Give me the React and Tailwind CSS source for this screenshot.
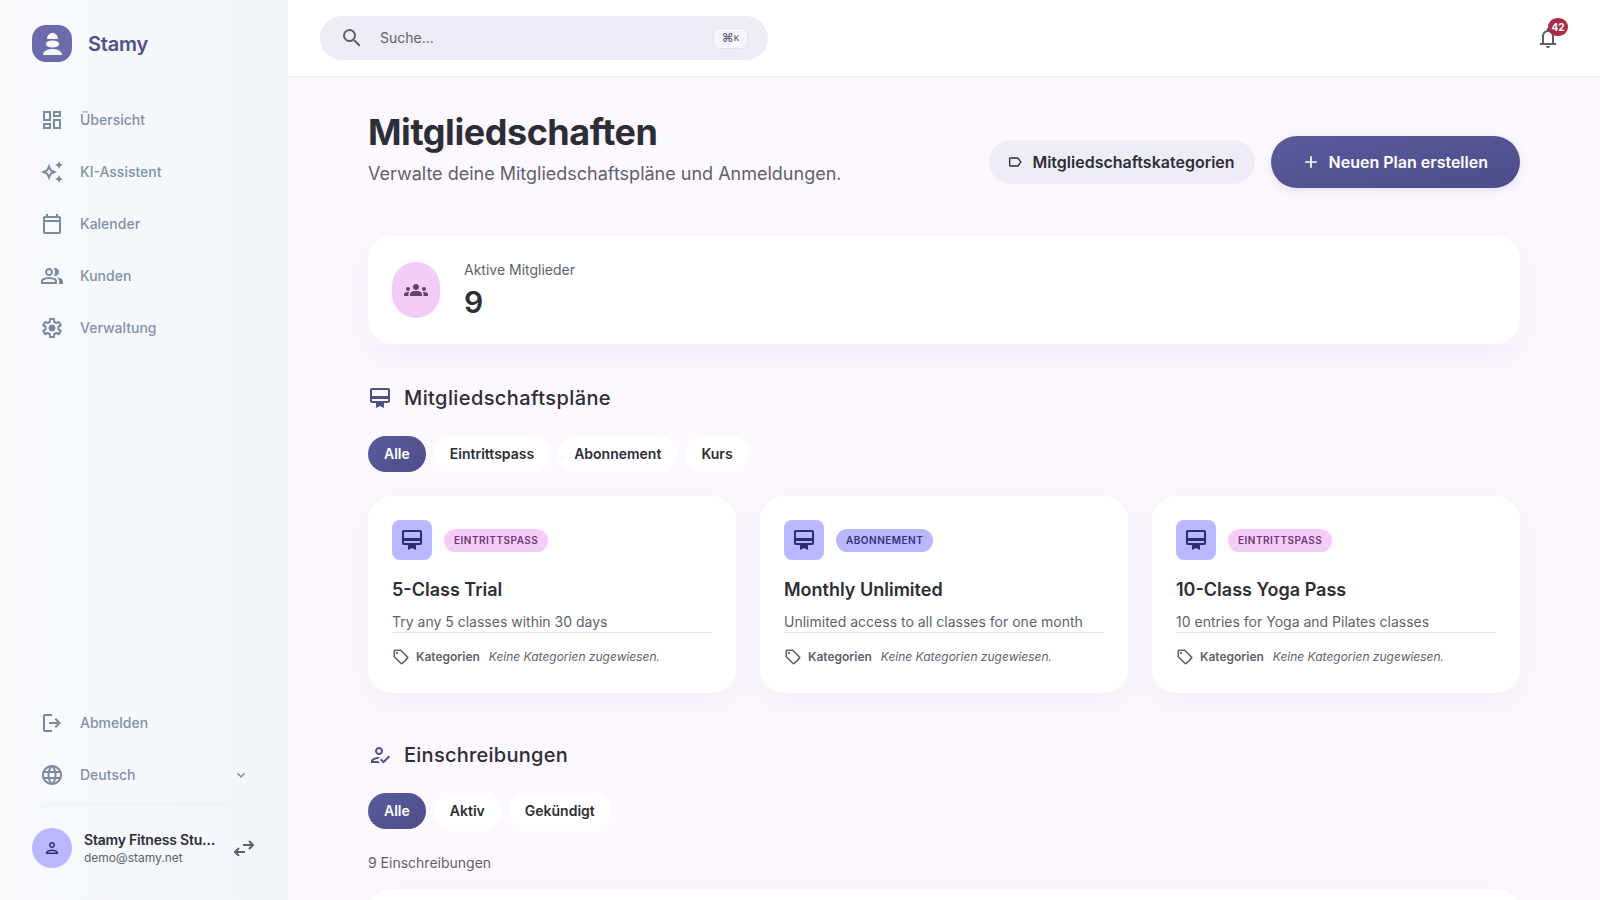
import React from 'react';
import {
  MdAdd,
  MdExpandMore,
  MdGroups,
  MdOutlineAutoAwesome,
  MdOutlineCardMembership,
  MdOutlineDashboard,
  MdOutlineHowToReg,
  MdOutlineLabel,
  MdOutlineLanguage,
  MdOutlinePerson,
  MdOutlineSearch,
  MdOutlineSell,
} from 'react-icons/md';

// Material Symbols paths, the classic set in react-icons draws these a bit differently
const Sym = ({ d, className }) => (
  <svg viewBox="0 -960 960 960" fill="currentColor" className={className}>
    <path d={d} />
  </svg>
);

const CalendarIcon = ({ className }) => (
  <Sym
    className={className}
    d="M200-80q-33 0-56.500-23.500T120-160v-560q0-33 23.500-56.500T200-800h40v-80h80v80h320v-80h80v80h40q33 0 56.500 23.500T840-720v560q0 33-23.500 56.500T760-80H200Zm0-80h560v-400H200v400Zm0-480h560v-80H200v80Zm0 0v-80 80Z"
  />
);

const GroupIcon = ({ className }) => (
  <Sym
    className={className}
    d="M40-160v-112q0-34 17.500-62.500T104-378q62-31 126-46.500T360-440q66 0 130 15.500T616-378q29 15 46.500 43.500T680-272v112H40Zm720 0v-120q0-44-24.500-84.500T666-434q51 6 96 20.500t84 35.500q36 20 55 44.500t19 53.500v120H760ZM360-480q-66 0-113-47t-47-113q0-66 47-113t113-47q66 0 113 47t47 113q0 66-47 113t-113 47Zm400-160q0 66-47 113t-113 47q-11 0-28-2.500t-28-5.500q27-32 41.500-71t14.500-81q0-42-14.500-81T544-792q14-5 28-6.500t28-1.500q66 0 113 47t47 113ZM120-240h480v-32q0-11-5.500-20T580-306q-54-27-109-40.500T360-360q-56 0-111 13.500T140-306q-9 5-14.500 14t-5.500 20v32Zm240-320q33 0 56.500-23.500T440-640q0-33-23.500-56.500T360-720q-33 0-56.500 23.500T280-640q0 33 23.500 56.500T360-560Zm0 320Zm0-400Z"
  />
);

const SettingsIcon = ({ className }) => (
  <Sym
    className={className}
    d="m370-80-16-128q-13-5-24.500-12T307-235l-119 50L78-375l103-78q-1-7-1-13.500v-27q0-6.500 1-13.500L78-585l110-190 119 50q11-8 23-15t24-12l16-128h220l16 128q13 5 24.500 12t22.500 15l119-50 110 190-103 78q1 7 1 13.500v27q0 6.500-2 13.500l103 78-110 190-118-50q-11 8-23 15t-24 12L590-80H370Zm70-80h79l14-106q31-8 57.500-23.500T639-327l99 41 39-68-86-65q5-14 7-29.500t2-31.500q0-16-2-31.500t-7-29.500l86-65-39-68-99 42q-22-23-48.500-38.500T533-694l-13-106h-79l-14 106q-31 8-57.500 23.500T321-633l-99-41-39 68 86 64q-5 15-7 30t-2 32q0 16 2 31t7 30l-86 65 39 68 99-42q22 23 48.500 38.500T427-266l13 106Zm42-180q58 0 99-41t41-99q0-58-41-99t-99-41q-59 0-99.500 41T342-480q0 58 40.500 99t99.500 41Zm-2-140Z"
  />
);

const LogoutIcon = ({ className }) => (
  <Sym
    className={className}
    d="M200-120q-33 0-56.500-23.500T120-200v-560q0-33 23.500-56.500T200-840h280v80H200v560h280v80H200Zm440-160-55-58 102-102H360v-80h327L585-622l55-58 200 200-200 200Z"
  />
);

const BellIcon = ({ className }) => (
  <Sym
    className={className}
    d="M160-200v-80h80v-280q0-83 50-147.500T420-792v-28q0-25 17.500-42.500T480-880q25 0 42.500 17.500T540-820v28q80 20 130 84.500T720-560v280h80v80H160Zm320-300Zm0 420q-33 0-56.500-23.500T400-160h160q0 33-23.500 56.500T480-80ZM320-280h320v-280q0-66-47-113t-113-47q-66 0-113 47t-47 113v280Z"
  />
);

const navItems = [
  { label: 'Übersicht', icon: MdOutlineDashboard },
  { label: 'KI-Assistent', icon: MdOutlineAutoAwesome },
  { label: 'Kalender', icon: CalendarIcon },
  { label: 'Kunden', icon: GroupIcon },
  { label: 'Verwaltung', icon: SettingsIcon },
];

const plans = [
  { title: '5-Class Trial', text: 'Try any 5 classes within 30 days', type: 'Eintrittspass' },
  { title: 'Monthly Unlimited', text: 'Unlimited access to all classes for one month', type: 'Abonnement' },
  { title: '10-Class Yoga Pass', text: '10 entries for Yoga and Pilates classes', type: 'Eintrittspass' },
];

const NavRow = ({ icon: Icon, label, children }) => (
  <div className="flex h-[52px] items-center gap-4 pl-10 pr-[39px] text-[14px] font-medium text-[#8490a6]">
    <Icon className="h-6 w-6 shrink-0 text-[#7c89a1]" />
    <span className="flex-1 pb-0.5">{label}</span>
    {children}
  </div>
);

const Chips = ({ items }) => (
  <div className="mt-6 flex gap-2">
    {items.map((item, i) => (
      <button
        key={item}
        className={`h-9 rounded-full px-4 pb-0.5 text-[14px] font-semibold ${
          i === 0
            ? 'bg-gradient-to-br from-[#5b5b9c] to-[#4c4c8a] text-white'
            : 'bg-white text-[#2d2d36]'
        }`}
      >
        {item}
      </button>
    ))}
  </div>
);

const PlanCard = ({ plan }) => {
  const isPass = plan.type === 'Eintrittspass';
  return (
    <div className="rounded-3xl bg-white p-6 pb-[27px] shadow-[0_8px_30px_rgba(90,80,160,0.06)]">
      <div className="flex items-center gap-3">
        <div className="flex h-10 w-10 items-center justify-center rounded-lg bg-[#b9b8ff]">
          <MdOutlineCardMembership className="h-6 w-6 text-[#2d2b75]" />
        </div>
        <span
          className={`flex h-[23px] items-center rounded-full px-2.5 text-[10px] font-semibold uppercase tracking-[0.5px] ${
            isPass ? 'bg-[#f4ccf8] text-[#6a3a72]' : 'bg-[#b9b8ff] text-[#33327c]'
          }`}
        >
          {plan.type}
        </span>
      </div>
      <h3 className="mt-4 text-[18px] leading-7 font-semibold text-[#2d2d36]">{plan.title}</h3>
      <p className="mt-2 border-b border-[#e3e1e9] text-[14px] leading-5 text-[#5f5f6e]">{plan.text}</p>
      <div className="mt-[15px] flex h-[18px] items-center text-[12px] text-[#5f5f6e]">
        <MdOutlineSell className="h-[18px] w-[18px]" />
        <span className="ml-1.5 font-semibold">Kategorien</span>
        <span className="ml-[9px] italic">Keine Kategorien zugewiesen.</span>
      </div>
    </div>
  );
};

const Logo = () => (
  <div className="flex h-[37px] w-10 items-center justify-center rounded-[14px] bg-[#6b6bab]">
    <svg viewBox="0 0 40 37" className="h-[37px] w-10 fill-[#f7f6ff]">
      <path d="M15 14c0-3.500 2.500-6 5.500-6s5.500 2.500 5.500 6z" />
      <ellipse cx="20.500" cy="19" rx="6.800" ry="3.600" />
      <path d="M11 30c0-3.500 4-6 9.500-6S30 26.500 30 30z" />
    </svg>
  </div>
);

const SwapIcon = () => (
  <svg viewBox="0 0 20 16" className="h-4 w-5 shrink-0 fill-none stroke-[#5f5f6e] stroke-2">
    <path d="M9 5h10M15 1l4 4-4 4" />
    <path d="M11 12H1M5 8l-4 4 4 4" />
  </svg>
);

const App = () => {
  return (
    <div className="flex h-screen overflow-hidden bg-[#fdf8ff] font-['Inter',sans-serif]">
      {/* Sidebar */}
      <aside className="flex w-72 shrink-0 flex-col bg-gradient-to-r from-[#f8fafc] to-[#f2f5fa]">
        <div className="flex items-center gap-4 pl-8 pt-[25px]">
          <Logo />
          <span className="text-[20px] font-semibold tracking-[-0.2px] text-[#4f4f8d]">Stamy</span>
        </div>
        <nav className="mt-[32px]">
          {navItems.map((item) => (
            <NavRow key={item.label} icon={item.icon} label={item.label} />
          ))}
        </nav>
        <div className="mt-auto">
          <NavRow icon={LogoutIcon} label="Abmelden" />
          <NavRow icon={MdOutlineLanguage} label="Deutsch">
            <MdExpandMore className="h-4 w-4 text-[#7c89a1]" />
          </NavRow>
          <div className="mx-6 mt-[2px] flex h-[97px] items-start rounded-t-[32px] border-t border-[#eef0f5] px-2 pt-6">
            <div className="flex h-10 w-10 shrink-0 items-center justify-center rounded-full bg-[#b9b8ff]">
              <MdOutlinePerson className="h-[18px] w-[18px] text-[#2d2b75]" />
            </div>
            <div className="ml-3 mt-0.5 w-[136px] min-w-0">
              <div className="truncate text-[14px] leading-5 font-semibold tracking-[-0.2px] text-[#2d2d36]">
                Stamy Fitness Studio
              </div>
              <div className="text-[12px] leading-4 text-[#5f5f6e]">demo@stamy.net</div>
            </div>
            <div className="ml-3.5 mt-3">
              <SwapIcon />
            </div>
          </div>
        </div>
      </aside>

      <div className="flex min-w-0 flex-1 flex-col">
        {/* Top bar */}
        <header className="flex h-[77px] shrink-0 items-center justify-between border-b border-[#f3f1f7] bg-white px-8">
          <div className="flex h-11 w-[448px] items-center rounded-full bg-[#eeedf6] pl-5 pr-5 text-[14px] text-[#5f5f6e]">
            <MdOutlineSearch className="h-6 w-6" />
            <span className="ml-4 flex-1 pb-0.5">Suche...</span>
            <span className="flex h-[21px] w-[35px] items-center justify-center rounded-md border border-[#e4e2ee] bg-[#f6f4fc] font-medium">
              <span className="text-[12px] leading-none">⌘</span>
              <span className="text-[8px] leading-none">K</span>
            </span>
          </div>
          <button className="relative p-2 text-[#5f5f6e]">
            <BellIcon className="h-6 w-6" />
            <span className="absolute right-0 top-0 flex h-[18px] w-5 items-center justify-center rounded-full bg-[#ab2c48] text-[10px] font-bold text-white">
              42
            </span>
          </button>
        </header>

        {/* Main content */}
        <main className="flex-1 overflow-hidden">
          <div className="mx-auto max-w-6xl pt-[35px]">
            <div className="flex items-end justify-between">
              <div>
                <h1 className="text-[36px] leading-10 font-bold tracking-[-0.45px] text-[#2d2d36]">Mitgliedschaften</h1>
                <p className="mt-2 text-[18px] leading-7 text-[#5f5f6e]">
                  Verwalte deine Mitgliedschaftspläne und Anmeldungen.
                </p>
              </div>
              <div className="flex items-center gap-4">
                <button className="flex h-11 items-center gap-[9px] rounded-full bg-[#eeedf6] pl-[18px] pr-5 text-[16px] font-semibold text-[#2d2d36]">
                  <MdOutlineLabel className="h-4 w-4" />
                  Mitgliedschaftskategorien
                </button>
                <button className="flex h-[52px] items-center gap-2 rounded-full bg-gradient-to-br from-[#5b5b9c] to-[#4c4c8a] pl-[30px] pr-8 text-[16px] font-semibold text-white shadow-[0_2px_8px_rgba(76,76,138,0.15)]">
                  <MdAdd className="h-5 w-5" />
                  Neuen Plan erstellen
                </button>
              </div>
            </div>

            {/* Stat card */}
            <div className="mt-12 flex h-[108px] items-center gap-6 rounded-3xl bg-white p-6 shadow-[0_10px_30px_rgba(90,80,160,0.07)]">
              <div className="flex h-14 w-12 items-center justify-center rounded-full bg-[#f4ccf8]">
                <MdGroups className="h-6 w-6 text-[#6a3a72]" />
              </div>
              <div>
                <div className="text-[14px] leading-5 text-[#5f5f6e]">Aktive Mitglieder</div>
                <div className="mt-1 text-[30px] leading-9 font-semibold text-[#2d2d36]">9</div>
              </div>
            </div>

            {/* Plans */}
            <h2 className="mt-10 flex items-center gap-3 text-[20px] leading-7 font-medium tracking-[0.4px] text-[#2d2d36]">
              <MdOutlineCardMembership className="h-6 w-6 text-[#4f4f8d]" />
              Mitgliedschaftspläne
            </h2>
            <Chips items={['Alle', 'Eintrittspass', 'Abonnement', 'Kurs']} />
            <div className="mt-6 grid grid-cols-3 gap-6">
              {plans.map((plan) => (
                <PlanCard key={plan.title} plan={plan} />
              ))}
            </div>

            {/* Enrollments */}
            <h2 className="mt-12 flex items-center gap-3 text-[20px] leading-7 font-medium tracking-[0.25px] text-[#2d2d36]">
              <MdOutlineHowToReg className="h-6 w-6 text-[#4f4f8d]" />
              Einschreibungen
            </h2>
            <Chips items={['Alle', 'Aktiv', 'Gekündigt']} />
            <p className="mt-6 text-[14px] leading-5 text-[#5f5f6e]">9 Einschreibungen</p>
            <div className="mt-4 h-40 rounded-3xl bg-white shadow-[0_8px_30px_rgba(90,80,160,0.06)]" />
          </div>
        </main>
      </div>
    </div>
  );
};

export default App;
